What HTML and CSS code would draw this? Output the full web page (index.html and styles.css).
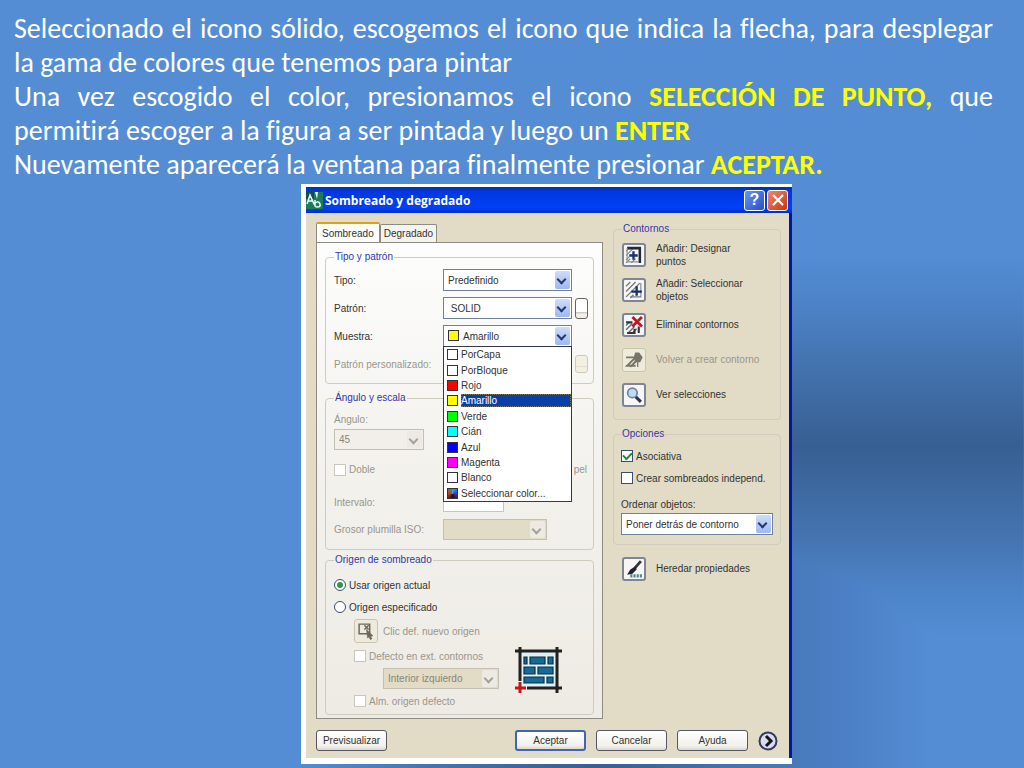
FILE: index.html
```
<!DOCTYPE html>
<html lang="es">
<head>
    <meta charset="UTF-8">
    <meta name="viewport" content="width=device-width, initial-scale=1.0">
    <title>Sombreado y degradado</title>
    <link rel="stylesheet" href="styles.css">
</head>
<body>

    <main class="slide">
        <div class="intro">
            <p>Seleccionado el icono sólido, escogemos el icono que indica la flecha, para desplegar la gama de colores que tenemos para pintar</p>
            <p><span class="full-line">Una vez escogido el color, presionamos el icono <strong>SELECCIÓN DE PUNTO,</strong> que</span> permitirá escoger a la figura a ser pintada y luego un <strong>ENTER</strong></p>
            <p>Nuevamente aparecerá la ventana para finalmente presionar <strong>ACEPTAR.</strong></p>
        </div>

        <section class="dialog">
            <header class="titlebar">
                <svg class="app-icon" width="17" height="17" viewBox="0 0 17 17">
                    <rect width="17" height="17" fill="#1d7a5c"/>
                    <path d="M0 0h8v7H0z" fill="#10504a"/>
                    <path d="M9 0l2 7 1-7z" fill="#e8fff4"/>
                    <path d="M1 12L4 3l4 9M2 9h5M8 13c2-4 5-4 6-1s-3 4-5 2V8" fill="none" stroke="#e8fff4" stroke-width="1.5"/>
                </svg>
                <h1>Sombreado y degradado</h1>
                <button class="win-btn help" aria-label="Ayuda">?</button>
                <button class="win-btn close" aria-label="Cerrar">
                    <svg width="12" height="12" viewBox="0 0 12 12"><path d="M1 1l10 10M11 1L1 11" stroke="#fff" stroke-width="2.2"/></svg>
                </button>
            </header>

            <div class="dialog-body">
                <div class="columns">
                    <div class="left">
                        <div class="tabs">
                            <button class="tab active">Sombreado</button>
                            <button class="tab">Degradado</button>
                        </div>
                        <div class="pane">
                            <!-- Tipo y patron -->
                            <fieldset class="group pattern">
                                <legend>Tipo y patrón</legend>
                                <label for="tipo">Tipo:</label>
                                <span class="combo"><select id="tipo"><option>Predefinido</option></select></span>
                                <label for="patron">Patrón:</label>
                                <span class="combo"><select id="patron"><option>&nbsp;SOLID</option></select></span>
                                <button class="more" aria-label="Examinar"></button>
                                <label for="muestra">Muestra:</label>
                                <span class="combo color-combo">
                                    <i class="swatch yellow"></i>
                                    <select id="muestra"><option>Amarillo</option></select>
                                    <ul class="color-list">
                                        <li><i class="swatch"></i><span>PorCapa</span></li>
                                        <li><i class="swatch"></i><span>PorBloque</span></li>
                                        <li><i class="swatch red"></i><span>Rojo</span></li>
                                        <li class="selected"><i class="swatch yellow"></i><span>Amarillo</span></li>
                                        <li><i class="swatch green"></i><span>Verde</span></li>
                                        <li><i class="swatch cyan"></i><span>Cián</span></li>
                                        <li><i class="swatch blue"></i><span>Azul</span></li>
                                        <li><i class="swatch magenta"></i><span>Magenta</span></li>
                                        <li><i class="swatch"></i><span>Blanco</span></li>
                                        <li><i class="swatch multi"></i><span>Seleccionar color...</span></li>
                                    </ul>
                                </span>
                                <label class="off" for="personalizado">Patrón personalizado:</label>
                                <span class="combo disabled"><select id="personalizado" disabled><option></option></select></span>
                                <button class="more" aria-label="Examinar" disabled></button>
                            </fieldset>

                            <!-- Angulo y escala -->
                            <fieldset class="group scale">
                                <legend>Ángulo y escala</legend>
                                <label class="off" for="angulo">Ángulo:</label>
                                <span class="combo disabled angle"><select id="angulo" disabled><option>45</option></select></span>
                                <div class="row double off">
                                    <label><input type="checkbox" disabled>Doble</label>
                                    <span>pel</span>
                                </div>
                                <div class="row interval">
                                    <label class="off" for="intervalo">Intervalo:</label>
                                    <input class="text-box" type="text" id="intervalo" disabled>
                                </div>
                                <div class="row">
                                    <label class="off" for="grosor">Grosor plumilla ISO:</label>
                                    <span class="combo disabled filled pen"><select id="grosor" disabled><option></option></select></span>
                                </div>
                            </fieldset>

                            <!-- Origen de sombreado -->
                            <fieldset class="group origin">
                                <legend>Origen de sombreado</legend>
                                <label><input type="radio" name="origen" checked>Usar origen actual</label>
                                <label><input type="radio" name="origen">Origen especificado</label>
                                <div class="origin-options off">
                                    <div class="origin-fields">
                                        <div class="pick">
                                            <button class="tool" id="clic" disabled>
                                                <svg width="18" height="18" viewBox="0 0 17 17" fill="none" stroke="#6b685e" stroke-width="1.4">
                                                    <path d="M2 2h10v9H2z"/>
                                                    <path d="M7 3l4 4M11 3L7 7"/>
                                                    <path d="M9 7l6 6-2 .5 1 2.500-1.500.500-1-2.500-1.500 1z" fill="#6b685e" stroke-width=".6"/>
                                                </svg>
                                            </button>
                                            <label for="clic">Clic def. nuevo origen</label>
                                        </div>
                                        <label><input type="checkbox" disabled>Defecto en ext. contornos</label>
                                        <span class="combo disabled filled corner"><select aria-label="Defecto" disabled><option>Interior izquierdo</option></select></span>
                                        <label><input type="checkbox" disabled>Alm. origen defecto</label>
                                    </div>
                                    <svg class="brick" width="48" height="48" viewBox="0 0 48 48">
                                        <rect x="6" y="6" width="36" height="36" fill="#dff1f7"/>
                                        <g fill="#176a94" stroke="#0b2f48" stroke-width="1.2">
                                            <path d="M9 11h3v7H9zM15 11h15v7H15zM33 11h5v7h-5z"/>
                                            <path d="M9 21h11v7H9zM23 21h15v7H23z"/>
                                            <path d="M9 31h20v6H9zM32 31h6v6h-6z"/>
                                        </g>
                                        <path d="M0 5h47M42 1v46M5 1v34M12 42h35" stroke="#22211f" stroke-width="3"/>
                                        <path d="M5 36v11M0 42h11" stroke="#c3161c" stroke-width="3"/>
                                    </svg>
                                </div>
                            </fieldset>
                        </div>
                    </div>

                    <div class="right">
                        <fieldset class="group contours">
                            <legend>Contornos</legend>
                            <div class="action">
                                <button class="tool" id="puntos">
                                    <svg width="18" height="18" viewBox="0 0 17 17">
                                        <path d="M1 5l3-3M1 9l7-7M1 13l3-3M1 16l4-4M6 16l4-4" stroke="#777b86"/>
                                        <path d="M2 2h12v14" fill="none" stroke="#22283c" stroke-width="2.400"/>
                                        <path d="M2 2v13h11" fill="none" stroke="#8a8e99"/>
                                        <path d="M8 5v8M4 9h8" stroke="#16336f" stroke-width="2.200"/>
                                    </svg>
                                </button>
                                <label for="puntos">Añadir: Designar<br>puntos</label>
                            </div>
                            <div class="action">
                                <button class="tool" id="objetos">
                                    <svg width="18" height="18" viewBox="0 0 17 17">
                                        <path d="M1 5l4-4M1 10l9-9M1 15L14 2M5 16l3-3" stroke="#777b86" stroke-width="1.300"/>
                                        <path d="M15 2v13H5" fill="none" stroke="#777b86"/>
                                        <path d="M11 5v9M6 10h10" stroke="#16336f" stroke-width="2.200"/>
                                    </svg>
                                </button>
                                <label for="objetos">Añadir: Seleccionar<br>objetos</label>
                            </div>
                            <div class="action">
                                <button class="tool" id="eliminar">
                                    <svg width="18" height="18" viewBox="0 0 17 17">
                                        <path d="M1 9l3-3M1 13l6-6M3 16l6-6M7 16l4-4" stroke="#666a75" stroke-width="1.300"/>
                                        <path d="M1 6h6M13 10v6M9 12v4H2" fill="none" stroke="#33343c" stroke-width="2"/>
                                        <path d="M7 1l9 9M16 1l-9 9" stroke="#bd1826" stroke-width="2.600"/>
                                    </svg>
                                </button>
                                <label for="eliminar">Eliminar contornos</label>
                            </div>
                            <div class="action off">
                                <button class="tool" id="volver" disabled>
                                    <svg width="18" height="18" viewBox="0 0 17 17">
                                        <path d="M1 6h9L2 14h8M5 15l6-6" fill="none" stroke="#77746a" stroke-width="1.800"/>
                                        <path d="M10 2h3l3 4-2 4h-4l-1-4zM12 9v6" fill="#77746a" stroke="#77746a" stroke-width="1.200"/>
                                    </svg>
                                </button>
                                <label for="volver">Volver a crear contorno</label>
                            </div>
                            <div class="action">
                                <button class="tool" id="ver">
                                    <svg width="18" height="18" viewBox="0 0 17 17">
                                        <path d="M10 10l5 5" stroke="#2c3350" stroke-width="2.800"/>
                                        <circle cx="7" cy="6.500" r="4.500" fill="#bcdcf0" stroke="#6684a8" stroke-width="1.600"/>
                                    </svg>
                                </button>
                                <label for="ver">Ver selecciones</label>
                            </div>
                        </fieldset>

                        <fieldset class="group options">
                            <legend>Opciones</legend>
                            <label><input type="checkbox" checked>Asociativa</label>
                            <label><input type="checkbox">Crear sombreados independ.</label>
                            <label class="order-label" for="ordenar">Ordenar objetos:</label>
                            <span class="combo"><select id="ordenar"><option>Poner detrás de contorno</option></select></span>
                        </fieldset>

                        <div class="action inherit">
                            <button class="tool" id="heredar">
                                <svg width="18" height="18" viewBox="0 0 17 17">
                                    <path d="M5 15h11" stroke="#4b8794" stroke-width="3" stroke-dasharray="2 1"/>
                                    <path d="M15 1L9 8" stroke="#33343c" stroke-width="2.600"/>
                                    <path d="M10 6l1 3-4 4-5 1 3-5z" fill="#22222a"/>
                                </svg>
                            </button>
                            <label for="heredar">Heredar propiedades</label>
                        </div>
                    </div>
                </div>

                <footer class="buttons">
                    <button class="btn preview">Previsualizar</button>
                    <button class="btn default">Aceptar</button>
                    <button class="btn">Cancelar</button>
                    <button class="btn">Ayuda</button>
                    <button class="expand" aria-label="Más opciones">
                        <svg width="20" height="20" viewBox="0 0 20 20">
                            <circle cx="10" cy="10" r="8.500" fill="#d9dbee" stroke="#34385e" stroke-width="2"/>
                            <path d="M8 5l5 5-5 5" fill="none" stroke="#14151f" stroke-width="3"/>
                        </svg>
                    </button>
                </footer>
            </div>
        </section>
    </main>

</body>
</html>
```
FILE: styles.css
```
* {
    box-sizing: border-box;
}

body {
    margin: 0;
    background: #548dd4;
    font-family: "Liberation Sans", Arial, sans-serif;
}

/* Blue slide, with a dark band on the right and a softer one under the dialog */
.slide {
    min-height: 100vh;
    padding: 12px 31px 4px 14px;
    background:
        linear-gradient(#548dd4 33%, #4d84c9 39%, #4474b0 47%, #375f92 58%, #4474b0 70%, #4d84c9 77%, #548dd4 83%) right top / 24% 100% no-repeat,
        linear-gradient(to right, #548dd4 29%, #4474b0 42%, #375f92 58%, #4474b0 72%, #4c80c6 83%, #548dd4 91%) left bottom / 100% 28% no-repeat,
        #548dd4;
    background-blend-mode: darken;
}

/* Text above the dialog */
.intro {
    color: #ffffff;
    font-family: Carlito, Lato, sans-serif;
    font-size: 28px;
    font-variant-ligatures: none;
    line-height: 34px;
    text-align: justify;
}

.intro p {
    margin: 0;
}

.intro strong {
    color: #ffff00;
}

.full-line {
    display: block;
    text-align-last: justify;
}

/* Dialog window */
.dialog {
    max-width: 491px;
    margin: 2px 0 0 287px;
    border: solid #ffffff;
    border-width: 3px 0 6px 5px;
    color: #333333;
    font-size: 10px;
    line-height: 13px;
}

.titlebar {
    display: flex;
    align-items: center;
    gap: 2px;
    height: 26px;
    padding: 0 4px 0 0;
    background: linear-gradient(#0030b8, #0038e0 20%, #0040f8 80%, #0030c0);
}

.titlebar h1 {
    flex: 1;
    margin: 0;
    color: #ffffff;
    font-family: "Open Sans", sans-serif;
    font-size: 12px;
}

.win-btn {
    display: flex;
    align-items: center;
    justify-content: center;
    width: 21px;
    height: 21px;
    padding: 0;
    border: 1px solid #ffffff;
    border-radius: 3px;
    color: #ffffff;
    font: bold 16px "Liberation Sans", sans-serif;
}

.help {
    background: linear-gradient(135deg, #6d92ee, #2350cc);
}

.close {
    background: linear-gradient(135deg, #ee8a68, #cc3311);
}

.dialog-body {
    padding: 9px 8px 7px 10px;
    border-right: 3px solid #0018a8;
    background: #e2dcc6;
}

.columns {
    display: flex;
    gap: 10px;
}

.left {
    flex: 1;
    min-width: 0;
}

.right {
    flex: none;
    width: 168px;
}

/* Tabs */
.tabs {
    display: flex;
    align-items: flex-end;
    height: 20px;
}

.tab {
    height: 18px;
    padding: 0 3px;
    border: 1px solid #8c8c84;
    border-bottom: 0;
    border-radius: 2px 2px 0 0;
    background: #f4f3ee;
    color: #333333;
    font: inherit;
}

.tab.active {
    height: 20px;
    padding: 0 5px;
    border-top: 2px solid #e5a01a;
    background: #fcfcfb;
}

.pane {
    padding: 7px 8px 3px;
    border: 1px solid #8c8c84;
    background: linear-gradient(#fdfdfd, #f2f1ec 50%, #eeebe4);
}

/* Group boxes */
.group {
    min-width: 0;
    margin: 0;
    padding: 0 8px;
    border: 1px solid #cfcbbd;
    border-radius: 4px;
}

.group legend {
    padding: 0 1px;
    color: #3237a8;
    line-height: 14px;
}

.off {
    color: #99968c;
}

.pattern {
    display: grid;
    grid-template-columns: 106px 129px 13px;
    grid-auto-rows: 28px;
    column-gap: 3px;
    align-items: center;
    margin-bottom: 7px;
    padding: 2px 4px 5px 8px;
}

.pattern label {
    grid-column: 1;
    white-space: nowrap;
}

/* Combo boxes */
.combo {
    position: relative;
    display: block;
}

.combo select {
    display: block;
    width: 100%;
    height: 22px;
    padding: 0 20px 0 4px;
    border: 1px solid #6f8099;
    border-radius: 0;
    background: #ffffff;
    color: #333333;
    font: inherit;
    appearance: none;
}

.combo::before {
    content: "";
    position: absolute;
    top: 2px;
    right: 2px;
    bottom: 2px;
    width: 15px;
    border-radius: 2px;
    background: linear-gradient(#cfdcfb, #9db8f2);
    pointer-events: none;
}

.combo::after {
    content: "";
    position: absolute;
    top: 7px;
    right: 7px;
    width: 5px;
    height: 5px;
    border: solid #23386e;
    border-width: 0 2px 2px 0;
    transform: rotate(45deg);
    pointer-events: none;
}

.combo.disabled select {
    height: 21px;
    border-color: #c3bfb2;
    background: #f1efe8;
    color: #88857b;
    opacity: 1;
}

.combo.filled select {
    background: #e2dcc6;
}

.combo.disabled::before {
    background: #eceae2;
}

.combo.disabled::after {
    border-color: #a5a296;
}

.more {
    width: 13px;
    height: 21px;
    padding: 0;
    border: 1px solid #66645e;
    border-radius: 3px;
    background: linear-gradient(#ffffff 70%, #c9c6bb 70%, #f1efe8 80%);
}

.more:disabled {
    height: 18px;
    border-color: #cfcab4;
    background: linear-gradient(#f3f0e2 60%, #cfcab4 60%, #f3f0e2 70%);
}

/* Colour drop-down */
.swatch {
    width: 11px;
    height: 11px;
    border: 1px solid #333333;
    background: #ffffff;
}

.red { background: #ff0000; }
.yellow { background: #ffff00; }
.green { background: #00ff00; }
.cyan { background: #00ffff; }
.blue { background: #0000ff; }
.magenta { background: #ff00ff; }
.multi { background: conic-gradient(#22aaff, #4433cc, #111111, #dd3322, #22aa44); }

.color-combo > .swatch {
    position: absolute;
    top: 5px;
    left: 5px;
}

.color-combo select {
    padding-left: 19px;
}

.color-list {
    position: absolute;
    top: 21px;
    left: 0;
    z-index: 2;
    display: flex;
    flex-direction: column;
    width: 100%;
    height: 156px;
    margin: 0;
    padding: 0;
    border: 1px solid #333a4a;
    background: #ffffff;
    list-style: none;
}

.color-list li {
    display: flex;
    flex: 1;
    align-items: center;
    gap: 3px;
    padding-left: 3px;
}

.color-list span {
    flex: 1;
}

.color-list .selected span {
    background: #0a3ea8;
    color: #ffffff;
    outline: 1px dotted #7d7a58;
    outline-offset: -1px;
}

/* Check boxes and radios */
input[type="checkbox"],
input[type="radio"] {
    display: grid;
    place-content: center;
    width: 12px;
    height: 12px;
    margin: 0;
    border: 1px solid #34506e;
    background: #ffffff;
    appearance: none;
}

input[type="radio"] {
    border-radius: 50%;
}

input[type]:disabled {
    border-color: #cac7ba;
}

input[type="checkbox"]:checked::before {
    content: "";
    width: 7px;
    height: 4px;
    margin-bottom: 2px;
    border: solid #21853a;
    border-width: 0 0 2px 2px;
    transform: rotate(-45deg);
}

input[type="radio"]:checked::before {
    content: "";
    width: 6px;
    height: 6px;
    border-radius: 50%;
    background: #2c9a42;
}

label:has(input) {
    display: flex;
    align-items: center;
    gap: 3px;
    white-space: nowrap;
}

/* Angulo y escala */
.scale {
    margin-bottom: 3px;
    padding: 8px 6px 9px 8px;
}

.scale > label {
    display: block;
    margin-bottom: 3px;
}

.angle {
    width: 90px;
}

.row {
    display: grid;
    grid-template-columns: 109px auto;
    justify-content: start;
    align-items: center;
    height: 21px;
    white-space: nowrap;
}

.double {
    grid-template-columns: auto auto;
    justify-content: space-between;
    margin: 9px 0 12px;
}

.interval {
    margin-bottom: 6px;
}

.interval .text-box {
    width: 61px;
    height: 19px;
    padding: 0 4px;
    border: 1px solid #8a8f99;
    background: #ffffff;
    color: #88857b;
    font: inherit;
}

.pen {
    width: 104px;
}

/* Origen de sombreado */
.origin {
    padding-bottom: 1px;
}

.origin > label {
    height: 22px;
}

.origin > legend + label {
    margin-top: 7px;
}

.origin-options {
    display: flex;
    justify-content: space-between;
    align-items: flex-end;
    padding: 0 22px 0 20px;
}

.origin-fields > label {
    height: 24px;
}

.pick {
    display: flex;
    align-items: center;
    gap: 5px;
    height: 26px;
}

.corner {
    width: 116px;
    margin-left: 29px;
}

.brick {
    margin-bottom: 19px;
}

/* Right column */
.tool {
    display: flex;
    flex: none;
    align-items: center;
    justify-content: center;
    width: 24px;
    height: 24px;
    padding: 0;
    border: 2px solid #7d8596;
    border-radius: 3px;
    background: #f7f6f2;
}

.tool:disabled {
    border: 1px solid #c9c4ad;
    background: #eeebdc;
}

.contours {
    margin-bottom: 7px;
    padding-top: 1px;
    padding-bottom: 7px;
}

.action {
    display: flex;
    align-items: center;
    gap: 10px;
    height: 35px;
}

.action label {
    flex: 1;
}

.options {
    padding: 0 7px 9px;
}

.options label:has(input) {
    height: 22px;
}

.options legend + label {
    margin-top: 4px;
}

.order-label {
    display: block;
    margin: 9px 0 2px;
}

.inherit {
    margin-top: 6px;
    padding-left: 9px;
}

/* Bottom buttons */
.buttons {
    display: flex;
    align-items: center;
    gap: 10px;
    margin-top: 11px;
    padding-right: 3px;
}

.btn {
    width: 71px;
    height: 21px;
    padding: 0;
    border: 1px solid #55595f;
    border-radius: 3px;
    background: linear-gradient(#ffffff, #f1f0ea 80%, #d9d6ca);
    color: #333333;
    font: inherit;
}

.btn.default {
    border: 2px solid #4264b4;
}

.preview {
    margin-right: auto;
}

.expand {
    display: flex;
    padding: 0;
    border: 0;
    background: none;
}
```
